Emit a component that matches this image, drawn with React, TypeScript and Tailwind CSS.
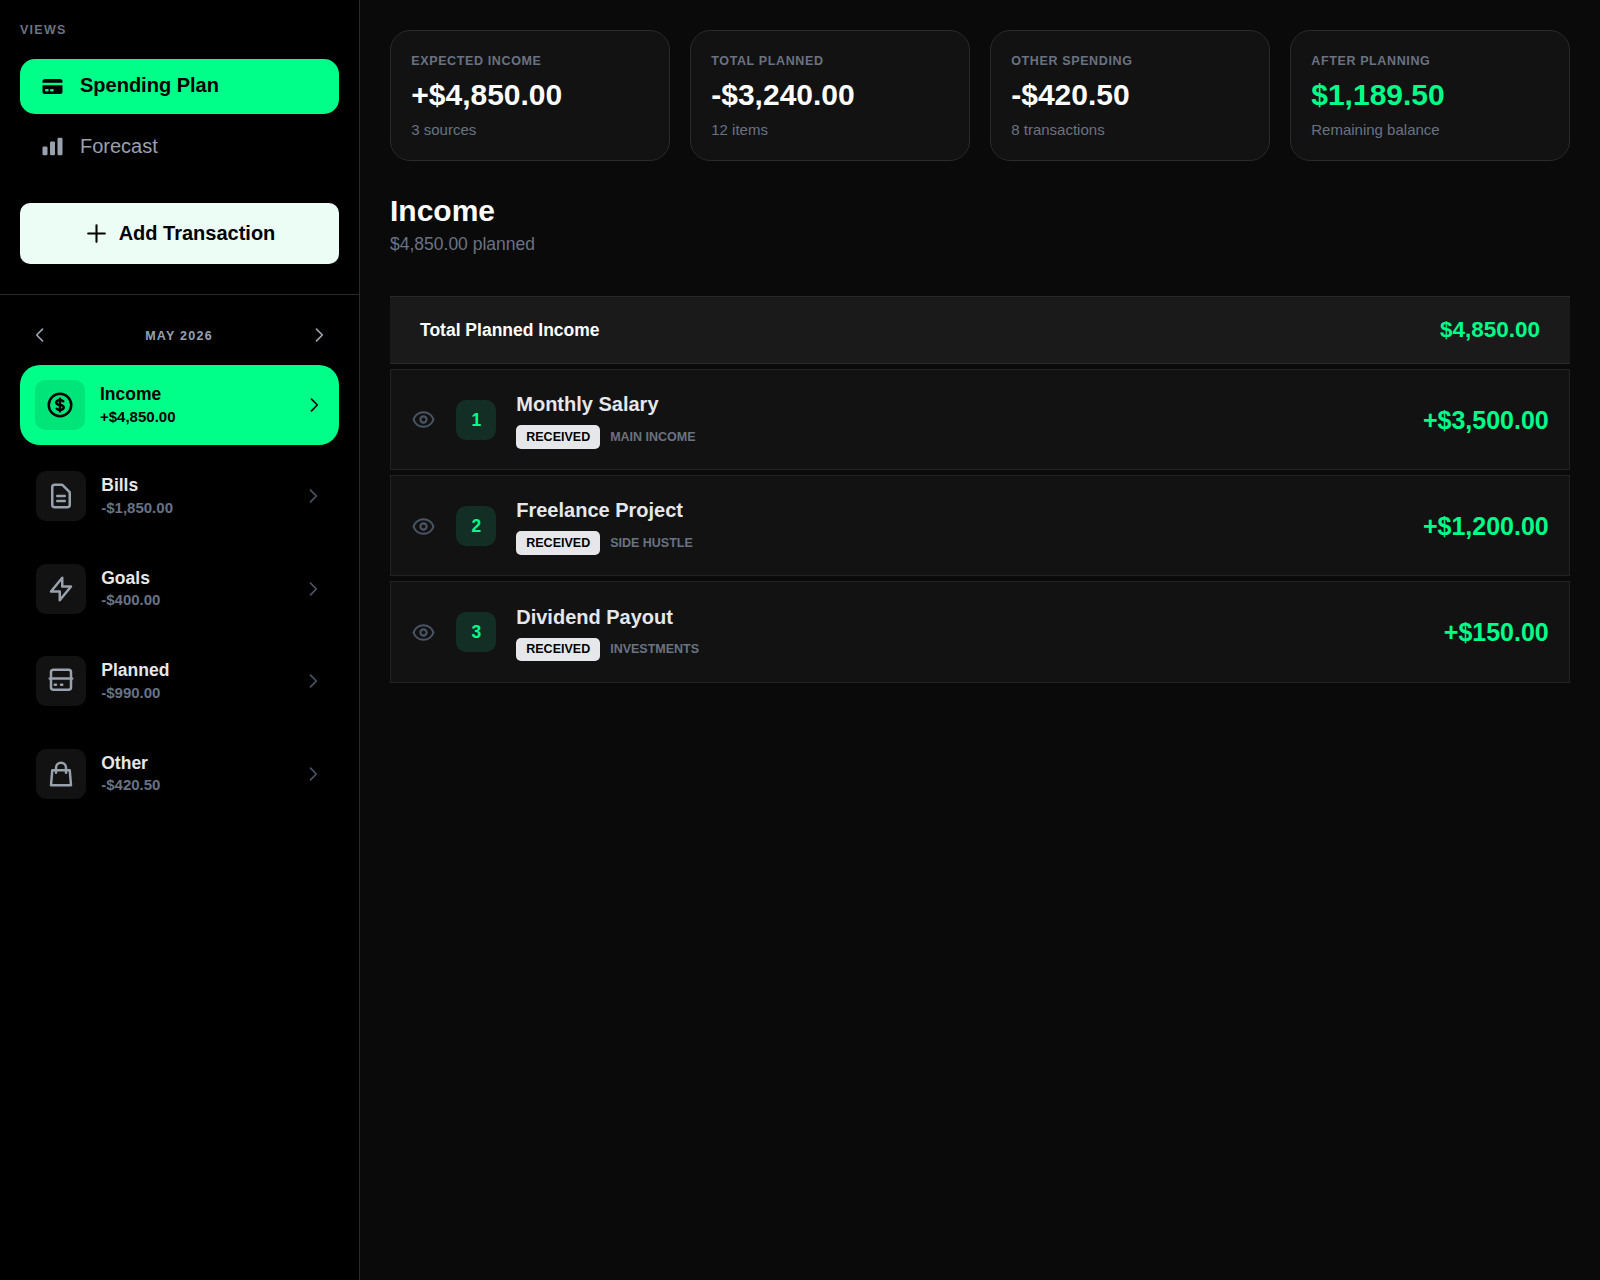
import type { ReactNode } from 'react';

type IconProps = { className?: string };

function CardIcon({ className }: IconProps) {
  return (
    <svg viewBox="0 0 20 20" fill="currentColor" className={className}>
      <path d="M4 4a2 2 0 00-2 2v1h16V6a2 2 0 00-2-2H4z" />
      <path
        fillRule="evenodd"
        clipRule="evenodd"
        d="M18 9H2v5a2 2 0 002 2h12a2 2 0 002-2V9zM4 13a1 1 0 011-1h1a1 1 0 110 2H5a1 1 0 01-1-1zm5-1a1 1 0 100 2h1a1 1 0 100-2H9z"
      />
    </svg>
  );
}

function BarsIcon({ className }: IconProps) {
  return (
    <svg viewBox="0 0 20 20" fill="currentColor" className={className}>
      <path d="M2 11a1 1 0 011-1h2a1 1 0 011 1v5a1 1 0 01-1 1H3a1 1 0 01-1-1v-5zM8 7a1 1 0 011-1h2a1 1 0 011 1v9a1 1 0 01-1 1H9a1 1 0 01-1-1V7zM14 4a1 1 0 011-1h2a1 1 0 011 1v12a1 1 0 01-1 1h-2a1 1 0 01-1-1V4z" />
    </svg>
  );
}

function StrokeIcon({ className, children }: IconProps & { children: ReactNode }) {
  return (
    <svg
      viewBox="0 0 24 24"
      fill="none"
      stroke="currentColor"
      strokeWidth={2}
      strokeLinecap="round"
      strokeLinejoin="round"
      className={className}
    >
      {children}
    </svg>
  );
}

function Chevron({ className, left }: IconProps & { left?: boolean }) {
  return (
    <StrokeIcon className={className}>
      <path d={left ? 'M15 19l-7-7 7-7' : 'M9 5l7 7-7 7'} />
    </StrokeIcon>
  );
}

function EyeIcon({ className }: IconProps) {
  return (
    <StrokeIcon className={className}>
      <path d="M15 12a3 3 0 11-6 0 3 3 0 016 0z" />
      <path d="M2.458 12C3.732 7.943 7.523 5 12 5c4.478 0 8.268 2.943 9.542 7-1.274 4.057-5.064 7-9.542 7-4.477 0-8.268-2.943-9.542-7z" />
    </StrokeIcon>
  );
}

const categories = [
  {
    name: 'Income',
    amount: '+$4,850.00',
    active: true,
    path: 'M12 8c-1.657 0-3 .895-3 2s1.343 2 3 2 3 .895 3 2-1.343 2-3 2m0-8c1.11 0 2.08.402 2.599 1M12 8V7m0 1v8m0 0v1m0-1c-1.11 0-2.08-.402-2.599-1M21 12a9 9 0 11-18 0 9 9 0 0118 0z',
  },
  {
    name: 'Bills',
    amount: '-$1,850.00',
    path: 'M9 12h6m-6 4h6m2 5H7a2 2 0 01-2-2V5a2 2 0 012-2h5.586a1 1 0 01.707.293l5.414 5.414a1 1 0 01.293.707V19a2 2 0 01-2 2z',
  },
  { name: 'Goals', amount: '-$400.00', path: 'M13 10V3L4 14h7v7l9-11h-7z' },
  {
    name: 'Planned',
    amount: '-$990.00',
    path: 'M3 10h18M7 15h1m4 0h1m-7 4h12a2 2 0 002-2V5a2 2 0 00-2-2H6a2 2 0 00-2 2v12a2 2 0 002 2z',
  },
  { name: 'Other', amount: '-$420.50', path: 'M16 11V7a4 4 0 00-8 0v4M5 9h14l1 12H4L5 9z' },
];

const stats = [
  { label: 'Expected Income', value: '+$4,850.00', note: '3 sources' },
  { label: 'Total Planned', value: '-$3,240.00', note: '12 items' },
  { label: 'Other Spending', value: '-$420.50', note: '8 transactions' },
  { label: 'After Planning', value: '$1,189.50', note: 'Remaining balance', positive: true },
];

const incomeItems = [
  { name: 'Monthly Salary', tag: 'Main Income', amount: '+$3,500.00' },
  { name: 'Freelance Project', tag: 'Side Hustle', amount: '+$1,200.00' },
  { name: 'Dividend Payout', tag: 'Investments', amount: '+$150.00' },
];

function Sidebar() {
  return (
    <aside className="w-[360px] shrink-0 bg-black border-r border-[#2a2a2a]">
      <div className="px-5 pt-5 pb-[30px] border-b border-[#2a2a2a]">
        <h2 className="mb-[18.75px] pt-px text-[12.5px] leading-[18.75px] font-bold uppercase tracking-[1.25px] text-gray-500">Views</h2>
        <nav className="flex flex-col gap-[5px]">
          <button className="flex h-[55.25px] items-center gap-[15px] rounded-[15px] bg-[#00ff88] px-5 text-xl font-semibold text-black">
            <CardIcon className="size-[25px]" />
            <span className="pb-0.5">Spending Plan</span>
          </button>
          <button className="flex h-[55px] items-center gap-[15px] rounded-[15px] px-5 text-xl text-gray-400">
            <BarsIcon className="size-[25px]" />
            <span>Forecast</span>
          </button>
        </nav>
        <button className="mt-[29.5px] flex h-[60.5px] w-full items-center justify-center gap-2.5 rounded-[10px] bg-[#ecfdf5] text-xl font-bold text-black">
          <StrokeIcon className="size-[25px]">
            <path d="M12 4v16m8-8H4" />
          </StrokeIcon>
          <span className="pb-0.5">Add Transaction</span>
        </button>
      </div>

      <div className="px-5 pt-[30px]">
        <div className="mb-5 flex h-5 items-center justify-between px-2.5">
          <button className="text-gray-400">
            <Chevron left className="size-5" />
          </button>
          <span className="pt-[3px] pr-px text-[12.5px] font-bold uppercase tracking-[1.25px] text-gray-400">May 2026</span>
          <button className="text-gray-400">
            <Chevron className="size-5" />
          </button>
        </div>

        <div className="flex flex-col gap-2.5">
          {categories.map((c) => (
            <button
              key={c.name}
              className={
                c.active
                  ? 'flex h-20 items-center gap-[15px] rounded-[20px] bg-[#00ff88] px-[15px] text-left text-black'
                  : 'flex h-[82.5px] items-center gap-[15px] rounded-[20px] px-[16.25px] text-left text-gray-200'
              }
            >
              <span
                className={
                  c.active
                    ? 'flex size-[50px] items-center justify-center rounded-[10px] bg-black/10'
                    : 'flex size-[50px] items-center justify-center rounded-[10px] bg-[#121212] text-gray-400'
                }
              >
                <StrokeIcon className="size-[30px]">
                  <path d={c.path} />
                </StrokeIcon>
              </span>
              <span className={c.active ? 'flex flex-1 flex-col pb-px' : 'flex flex-1 flex-col pb-px'}>
                <span className="text-[17.5px] leading-[24.5px] font-bold">{c.name}</span>
                <span className={c.active ? 'text-[15px] leading-5 font-semibold' : 'text-[15px] leading-5 font-semibold text-gray-500'}>
                  {c.amount}
                </span>
              </span>
              <Chevron className={c.active ? 'size-5' : 'size-5 text-gray-600'} />
            </button>
          ))}
        </div>
      </div>
    </aside>
  );
}

export default function App() {
  return (
    <div className="flex h-screen w-full overflow-hidden bg-[#0a0a0a] font-['Liberation_Sans',Arial,sans-serif] text-white">
      <Sidebar />

      <main className="flex-1 p-[30px]">
        {/* Summary cards */}
        <div className="grid grid-cols-4 gap-5">
          {stats.map((s) => (
            <div key={s.label} className="h-[131.25px] rounded-[20px] border border-[#2a2a2a] bg-[#121212] px-[20.25px] pt-[21.25px]">
              <p className="mb-1 text-[12.5px] leading-[18.75px] font-bold uppercase tracking-[0.625px] text-gray-500">{s.label}</p>
              <p className={s.positive ? 'text-[30px] leading-10 font-bold text-[#00ff88]' : 'text-[30px] leading-10 font-bold'}>{s.value}</p>
              <p className="mt-[5px] text-[15px] leading-5 text-gray-500">{s.note}</p>
            </div>
          ))}
        </div>

        <header className="mt-[30px] mb-[39px]">
          <h1 className="text-[30px] leading-10 font-bold">Income</h1>
          <p className="pt-px text-[17.5px] leading-[25px] text-gray-500">$4,850.00 planned</p>
        </header>

        <section className="flex flex-col gap-[5px]">
          <div className="flex h-[67.5px] items-center justify-between border-y border-[#2a2a2a] bg-[#1a1a1a] px-[30px]">
            <span className="text-[17.5px] font-bold">Total Planned Income</span>
            <span className="text-[22.5px] font-bold text-[#00ff88]">$4,850.00</span>
          </div>
          {incomeItems.map((item, i) => (
            <div key={item.name} className="flex h-[101.25px] items-center gap-5 border border-[#222222] bg-[#121212] px-[20.25px]">
              <EyeIcon className="mt-px size-[25px] text-gray-600" />
              <span className="mt-px flex size-10 items-center justify-center rounded-[10px] bg-[#122e25] text-[17.5px] font-bold text-[#00ff88]">
                {i + 1}
              </span>
              <div className="flex-1">
                <h3 className="mb-1.5 text-xl leading-[29px] font-bold text-gray-200">{item.name}</h3>
                <div className="flex items-center gap-2.5 text-[12.5px] leading-[18.75px] font-bold uppercase">
                  <span className="rounded-[5px] bg-gray-200 px-2.5 py-[2.5px] text-black">Received</span>
                  <span className="text-gray-500">{item.tag}</span>
                </div>
              </div>
              <span className="pt-0.5 text-[25px] font-bold text-[#00ff88]">{item.amount}</span>
            </div>
          ))}
        </section>
      </main>
    </div>
  );
}
